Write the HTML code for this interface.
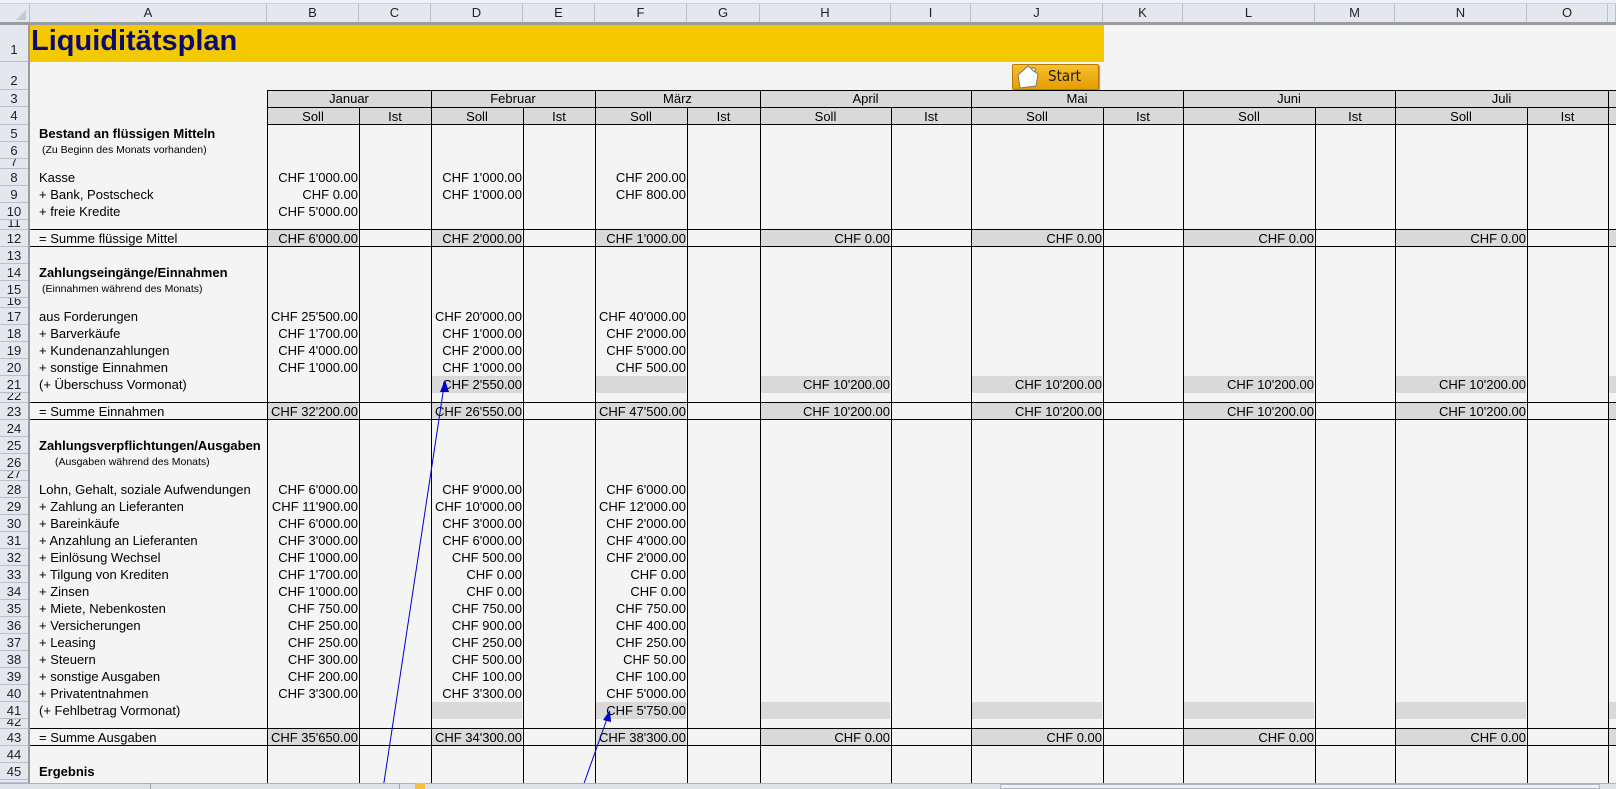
<!DOCTYPE html>
<html><head><meta charset="utf-8">
<style>
*{margin:0;padding:0;box-sizing:border-box}
body{width:1616px;height:789px;overflow:hidden;background:#f4f4f4;font-family:"Liberation Sans",Arial,sans-serif;color:#000;position:relative}
.a{position:absolute}
.t{position:absolute;height:17px;line-height:17px;font-size:13px;white-space:nowrap}
.v{text-align:right;overflow:visible}
.cB{left:267px;width:91px}.cD{left:431px;width:91px}.cF{left:595px;width:91px}
.cH{left:760px;width:130px}.cJ{left:971px;width:131px}.cL{left:1183px;width:131px}.cN{left:1395px;width:131px}
.lab{left:39px}
.sm{font-size:10.5px}
.b{font-weight:bold}
.vl{position:absolute;width:1px;background:#000;top:90px;height:693px}
.hl{position:absolute;height:1px;background:#000;left:267px;width:1349px}
.g{position:absolute;background:#d9d9d9;height:17px}
.rh{position:absolute;left:0;width:28px;text-align:center;font-size:13px;color:#222;overflow:hidden;border-bottom:1px solid #b7c0cc;background:#e4e8ee}
.ch{position:absolute;top:4px;height:18px;line-height:18px;text-align:center;font-size:13px;color:#222;border-right:1px solid #b7c0cc;background:#e4e8ee}
.mh{position:absolute;height:17px;line-height:17px;text-align:center;font-size:13px}
</style></head><body>
<div class="a" style="left:0;top:0;width:1616px;height:4px;background:#eef1f5;border-bottom:1px solid #c8ced6"></div>
<div class="ch" style="left:0;width:30px"></div>
<svg class="a" style="left:16px;top:10px" width="10" height="10"><polygon points="10,0 10,10 0,10" fill="#c3c9d1"/></svg>
<div class="ch" style="left:30px;width:237px">A</div>
<div class="ch" style="left:267px;width:92px">B</div>
<div class="ch" style="left:359px;width:72px">C</div>
<div class="ch" style="left:431px;width:92px">D</div>
<div class="ch" style="left:523px;width:72px">E</div>
<div class="ch" style="left:595px;width:92px">F</div>
<div class="ch" style="left:687px;width:73px">G</div>
<div class="ch" style="left:760px;width:131px">H</div>
<div class="ch" style="left:891px;width:80px">I</div>
<div class="ch" style="left:971px;width:132px">J</div>
<div class="ch" style="left:1103px;width:80px">K</div>
<div class="ch" style="left:1183px;width:132px">L</div>
<div class="ch" style="left:1315px;width:80px">M</div>
<div class="ch" style="left:1395px;width:132px">N</div>
<div class="ch" style="left:1527px;width:81px">O</div>
<div class="ch" style="left:1608px;width:8px"></div>
<div class="a" style="left:0;top:22px;width:1616px;height:3px;background:#9c9c9c"></div>
<div class="a" style="left:28px;top:22px;width:2px;height:761px;background:#9c9c9c"></div>

<div class="rh" style="top:25px;height:37px;line-height:50px">1</div>
<div class="rh" style="top:62px;height:28px;line-height:38px">2</div>
<div class="rh" style="top:90px;height:17px;line-height:17px">3</div>
<div class="rh" style="top:107px;height:18px;line-height:18px">4</div>
<div class="rh" style="top:125px;height:17px;line-height:17px">5</div>
<div class="rh" style="top:142px;height:17px;line-height:17px">6</div>
<div class="rh" style="top:159px;height:10px;line-height:6px">7</div>
<div class="rh" style="top:169px;height:17px;line-height:17px">8</div>
<div class="rh" style="top:186px;height:17px;line-height:17px">9</div>
<div class="rh" style="top:203px;height:17px;line-height:17px">10</div>
<div class="rh" style="top:220px;height:10px;line-height:6px">11</div>
<div class="rh" style="top:230px;height:17px;line-height:17px">12</div>
<div class="rh" style="top:247px;height:17px;line-height:17px">13</div>
<div class="rh" style="top:264px;height:17px;line-height:17px">14</div>
<div class="rh" style="top:281px;height:17px;line-height:17px">15</div>
<div class="rh" style="top:298px;height:10px;line-height:6px">16</div>
<div class="rh" style="top:308px;height:17px;line-height:17px">17</div>
<div class="rh" style="top:325px;height:17px;line-height:17px">18</div>
<div class="rh" style="top:342px;height:17px;line-height:17px">19</div>
<div class="rh" style="top:359px;height:17px;line-height:17px">20</div>
<div class="rh" style="top:376px;height:17px;line-height:17px">21</div>
<div class="rh" style="top:393px;height:10px;line-height:6px">22</div>
<div class="rh" style="top:403px;height:17px;line-height:17px">23</div>
<div class="rh" style="top:420px;height:17px;line-height:17px">24</div>
<div class="rh" style="top:437px;height:17px;line-height:17px">25</div>
<div class="rh" style="top:454px;height:17px;line-height:17px">26</div>
<div class="rh" style="top:471px;height:10px;line-height:6px">27</div>
<div class="rh" style="top:481px;height:17px;line-height:17px">28</div>
<div class="rh" style="top:498px;height:17px;line-height:17px">29</div>
<div class="rh" style="top:515px;height:17px;line-height:17px">30</div>
<div class="rh" style="top:532px;height:17px;line-height:17px">31</div>
<div class="rh" style="top:549px;height:17px;line-height:17px">32</div>
<div class="rh" style="top:566px;height:17px;line-height:17px">33</div>
<div class="rh" style="top:583px;height:17px;line-height:17px">34</div>
<div class="rh" style="top:600px;height:17px;line-height:17px">35</div>
<div class="rh" style="top:617px;height:17px;line-height:17px">36</div>
<div class="rh" style="top:634px;height:17px;line-height:17px">37</div>
<div class="rh" style="top:651px;height:17px;line-height:17px">38</div>
<div class="rh" style="top:668px;height:17px;line-height:17px">39</div>
<div class="rh" style="top:685px;height:17px;line-height:17px">40</div>
<div class="rh" style="top:702px;height:17px;line-height:17px">41</div>
<div class="rh" style="top:719px;height:10px;line-height:6px">42</div>
<div class="rh" style="top:729px;height:17px;line-height:17px">43</div>
<div class="rh" style="top:746px;height:17px;line-height:17px">44</div>
<div class="rh" style="top:763px;height:17px;line-height:17px">45</div>
<div class="rh" style="top:780px;height:3px;line-height:17px">46</div>

<div class="a" style="left:30px;top:25px;width:1074px;height:37px;background:#f5c900"></div>
<div class="a b" style="left:31px;top:25px;height:37px;line-height:33px;font-size:29px;color:#0c0c6c">Liquiditätsplan</div>

<div class="a" style="left:1012px;top:64px;width:87px;height:26px;background:linear-gradient(#f7c02c,#e59d00);border:1px solid #b67a00;border-radius:2px;box-shadow:1px 1px 1px #999"></div>
<svg class="a" style="left:1015px;top:63px" width="26" height="28" viewBox="0 0 26 28"><polygon points="3,12 13,3 23,11 21,23 5,25" fill="#fff" stroke="#777" stroke-width="1"/><polygon points="17,5 20,5 20,9 17,7" fill="#fff" stroke="#777" stroke-width="1"/></svg>
<div class="a" style="left:1048px;top:64px;height:26px;line-height:24px;font-size:15px;color:#1a1a1a;font-family:'DejaVu Sans Condensed','Liberation Sans',sans-serif">Start</div>

<div class="g" style="left:267px;top:90px;width:1349px;height:35px"></div>
<div class="g cB" style="top:230px"></div><div class="g cD" style="top:230px"></div><div class="g cF" style="top:230px"></div><div class="g cH" style="top:230px"></div><div class="g cJ" style="top:230px"></div><div class="g cL" style="top:230px"></div><div class="g cN" style="top:230px"></div><div class="g" style="left:1608px;width:8px;top:230px"></div>
<div class="g cB" style="top:403px"></div><div class="g cD" style="top:403px"></div><div class="g cF" style="top:403px"></div><div class="g cH" style="top:403px"></div><div class="g cJ" style="top:403px"></div><div class="g cL" style="top:403px"></div><div class="g cN" style="top:403px"></div><div class="g" style="left:1608px;width:8px;top:403px"></div>
<div class="g cB" style="top:729px"></div><div class="g cD" style="top:729px"></div><div class="g cF" style="top:729px"></div><div class="g cH" style="top:729px"></div><div class="g cJ" style="top:729px"></div><div class="g cL" style="top:729px"></div><div class="g cN" style="top:729px"></div><div class="g" style="left:1608px;width:8px;top:729px"></div>
<div class="g cD" style="top:376px"></div><div class="g cF" style="top:376px"></div><div class="g cH" style="top:376px"></div><div class="g cJ" style="top:376px"></div><div class="g cL" style="top:376px"></div><div class="g cN" style="top:376px"></div><div class="g" style="left:1608px;width:8px;top:376px"></div>
<div class="g cD" style="top:702px"></div><div class="g cF" style="top:702px"></div><div class="g cH" style="top:702px"></div><div class="g cJ" style="top:702px"></div><div class="g cL" style="top:702px"></div><div class="g cN" style="top:702px"></div><div class="g" style="left:1608px;width:8px;top:702px"></div>

<div class="hl" style="top:90px"></div>
<div class="hl" style="top:107px"></div>
<div class="hl" style="top:124px"></div>
<div class="hl" style="top:229px;left:30px;width:1586px"></div>
<div class="hl" style="top:246px;left:30px;width:1586px"></div>
<div class="hl" style="top:402px;left:30px;width:1586px"></div>
<div class="hl" style="top:419px;left:30px;width:1586px"></div>
<div class="hl" style="top:728px;left:30px;width:1586px"></div>
<div class="hl" style="top:745px;left:30px;width:1586px"></div>

<div class="vl" style="left:267px"></div>
<div class="vl" style="left:359px;top:107px;height:676px"></div>
<div class="vl" style="left:431px"></div>
<div class="vl" style="left:523px;top:107px;height:676px"></div>
<div class="vl" style="left:595px"></div>
<div class="vl" style="left:687px;top:107px;height:676px"></div>
<div class="vl" style="left:760px"></div>
<div class="vl" style="left:891px;top:107px;height:676px"></div>
<div class="vl" style="left:971px"></div>
<div class="vl" style="left:1103px;top:107px;height:676px"></div>
<div class="vl" style="left:1183px"></div>
<div class="vl" style="left:1315px;top:107px;height:676px"></div>
<div class="vl" style="left:1395px"></div>
<div class="vl" style="left:1527px;top:107px;height:676px"></div>
<div class="vl" style="left:1608px"></div>

<div class="mh" style="left:267px;width:164px;top:90px">Januar</div>
<div class="mh" style="left:431px;width:164px;top:90px">Februar</div>
<div class="mh" style="left:595px;width:165px;top:90px">März</div>
<div class="mh" style="left:760px;width:211px;top:90px">April</div>
<div class="mh" style="left:971px;width:212px;top:90px">Mai</div>
<div class="mh" style="left:1183px;width:212px;top:90px">Juni</div>
<div class="mh" style="left:1395px;width:213px;top:90px">Juli</div>
<div class="mh" style="left:267px;width:92px;top:108px">Soll</div><div class="mh" style="left:359px;width:72px;top:108px">Ist</div>
<div class="mh" style="left:431px;width:92px;top:108px">Soll</div><div class="mh" style="left:523px;width:72px;top:108px">Ist</div>
<div class="mh" style="left:595px;width:92px;top:108px">Soll</div><div class="mh" style="left:687px;width:73px;top:108px">Ist</div>
<div class="mh" style="left:760px;width:131px;top:108px">Soll</div><div class="mh" style="left:891px;width:80px;top:108px">Ist</div>
<div class="mh" style="left:971px;width:132px;top:108px">Soll</div><div class="mh" style="left:1103px;width:80px;top:108px">Ist</div>
<div class="mh" style="left:1183px;width:132px;top:108px">Soll</div><div class="mh" style="left:1315px;width:80px;top:108px">Ist</div>
<div class="mh" style="left:1395px;width:132px;top:108px">Soll</div><div class="mh" style="left:1527px;width:81px;top:108px">Ist</div>

<div class="t lab b" style="top:125px">Bestand an flüssigen Mitteln</div>
<div class="t lab sm" style="top:142px;left:42px">(Zu Beginn des Monats vorhanden)</div>
<div class="t lab" style="top:169px">Kasse</div>
<div class="t lab" style="top:186px">+ Bank, Postscheck</div>
<div class="t lab" style="top:203px">+ freie Kredite</div>
<div class="t lab" style="top:230px">= Summe flüssige Mittel</div>
<div class="t lab b" style="top:264px">Zahlungseingänge/Einnahmen</div>
<div class="t lab sm" style="top:281px;left:42px">(Einnahmen während des Monats)</div>
<div class="t lab" style="top:308px">aus Forderungen</div>
<div class="t lab" style="top:325px">+ Barverkäufe</div>
<div class="t lab" style="top:342px">+ Kundenanzahlungen</div>
<div class="t lab" style="top:359px">+ sonstige Einnahmen</div>
<div class="t lab" style="top:376px">(+ Überschuss Vormonat)</div>
<div class="t lab" style="top:403px">= Summe Einnahmen</div>
<div class="t lab b" style="top:437px">Zahlungsverpflichtungen/Ausgaben</div>
<div class="t lab sm" style="top:454px;left:55px">(Ausgaben während des Monats)</div>
<div class="t lab" style="top:481px">Lohn, Gehalt, soziale Aufwendungen</div>
<div class="t lab" style="top:498px">+ Zahlung an Lieferanten</div>
<div class="t lab" style="top:515px">+ Bareinkäufe</div>
<div class="t lab" style="top:532px">+ Anzahlung an Lieferanten</div>
<div class="t lab" style="top:549px">+ Einlösung Wechsel</div>
<div class="t lab" style="top:566px">+ Tilgung von Krediten</div>
<div class="t lab" style="top:583px">+ Zinsen</div>
<div class="t lab" style="top:600px">+ Miete, Nebenkosten</div>
<div class="t lab" style="top:617px">+ Versicherungen</div>
<div class="t lab" style="top:634px">+ Leasing</div>
<div class="t lab" style="top:651px">+ Steuern</div>
<div class="t lab" style="top:668px">+ sonstige Ausgaben</div>
<div class="t lab" style="top:685px">+ Privatentnahmen</div>
<div class="t lab" style="top:702px">(+ Fehlbetrag Vormonat)</div>
<div class="t lab" style="top:729px">= Summe Ausgaben</div>
<div class="t lab b" style="top:763px">Ergebnis</div>

<div class="t v cB" style="top:169px">CHF 1'000.00</div>
<div class="t v cB" style="top:186px">CHF 0.00</div>
<div class="t v cB" style="top:203px">CHF 5'000.00</div>
<div class="t v cB" style="top:230px">CHF 6'000.00</div>
<div class="t v cB" style="top:308px">CHF 25'500.00</div>
<div class="t v cB" style="top:325px">CHF 1'700.00</div>
<div class="t v cB" style="top:342px">CHF 4'000.00</div>
<div class="t v cB" style="top:359px">CHF 1'000.00</div>
<div class="t v cB" style="top:403px">CHF 32'200.00</div>
<div class="t v cB" style="top:481px">CHF 6'000.00</div>
<div class="t v cB" style="top:498px">CHF 11'900.00</div>
<div class="t v cB" style="top:515px">CHF 6'000.00</div>
<div class="t v cB" style="top:532px">CHF 3'000.00</div>
<div class="t v cB" style="top:549px">CHF 1'000.00</div>
<div class="t v cB" style="top:566px">CHF 1'700.00</div>
<div class="t v cB" style="top:583px">CHF 1'000.00</div>
<div class="t v cB" style="top:600px">CHF 750.00</div>
<div class="t v cB" style="top:617px">CHF 250.00</div>
<div class="t v cB" style="top:634px">CHF 250.00</div>
<div class="t v cB" style="top:651px">CHF 300.00</div>
<div class="t v cB" style="top:668px">CHF 200.00</div>
<div class="t v cB" style="top:685px">CHF 3'300.00</div>
<div class="t v cB" style="top:729px">CHF 35'650.00</div>

<div class="t v cD" style="top:169px">CHF 1'000.00</div>
<div class="t v cD" style="top:186px">CHF 1'000.00</div>
<div class="t v cD" style="top:230px">CHF 2'000.00</div>
<div class="t v cD" style="top:308px">CHF 20'000.00</div>
<div class="t v cD" style="top:325px">CHF 1'000.00</div>
<div class="t v cD" style="top:342px">CHF 2'000.00</div>
<div class="t v cD" style="top:359px">CHF 1'000.00</div>
<div class="t v cD" style="top:376px">CHF 2'550.00</div>
<div class="t v cD" style="top:403px">CHF 26'550.00</div>
<div class="t v cD" style="top:481px">CHF 9'000.00</div>
<div class="t v cD" style="top:498px">CHF 10'000.00</div>
<div class="t v cD" style="top:515px">CHF 3'000.00</div>
<div class="t v cD" style="top:532px">CHF 6'000.00</div>
<div class="t v cD" style="top:549px">CHF 500.00</div>
<div class="t v cD" style="top:566px">CHF 0.00</div>
<div class="t v cD" style="top:583px">CHF 0.00</div>
<div class="t v cD" style="top:600px">CHF 750.00</div>
<div class="t v cD" style="top:617px">CHF 900.00</div>
<div class="t v cD" style="top:634px">CHF 250.00</div>
<div class="t v cD" style="top:651px">CHF 500.00</div>
<div class="t v cD" style="top:668px">CHF 100.00</div>
<div class="t v cD" style="top:685px">CHF 3'300.00</div>
<div class="t v cD" style="top:729px">CHF 34'300.00</div>

<div class="t v cF" style="top:169px">CHF 200.00</div>
<div class="t v cF" style="top:186px">CHF 800.00</div>
<div class="t v cF" style="top:230px">CHF 1'000.00</div>
<div class="t v cF" style="top:308px">CHF 40'000.00</div>
<div class="t v cF" style="top:325px">CHF 2'000.00</div>
<div class="t v cF" style="top:342px">CHF 5'000.00</div>
<div class="t v cF" style="top:359px">CHF 500.00</div>
<div class="t v cF" style="top:403px">CHF 47'500.00</div>
<div class="t v cF" style="top:481px">CHF 6'000.00</div>
<div class="t v cF" style="top:498px">CHF 12'000.00</div>
<div class="t v cF" style="top:515px">CHF 2'000.00</div>
<div class="t v cF" style="top:532px">CHF 4'000.00</div>
<div class="t v cF" style="top:549px">CHF 2'000.00</div>
<div class="t v cF" style="top:566px">CHF 0.00</div>
<div class="t v cF" style="top:583px">CHF 0.00</div>
<div class="t v cF" style="top:600px">CHF 750.00</div>
<div class="t v cF" style="top:617px">CHF 400.00</div>
<div class="t v cF" style="top:634px">CHF 250.00</div>
<div class="t v cF" style="top:651px">CHF 50.00</div>
<div class="t v cF" style="top:668px">CHF 100.00</div>
<div class="t v cF" style="top:685px">CHF 5'000.00</div>
<div class="t v cF" style="top:702px">CHF 5'750.00</div>
<div class="t v cF" style="top:729px">CHF 38'300.00</div>

<div class="t v cH" style="top:230px">CHF 0.00</div><div class="t v cH" style="top:376px">CHF 10'200.00</div><div class="t v cH" style="top:403px">CHF 10'200.00</div><div class="t v cH" style="top:729px">CHF 0.00</div>
<div class="t v cJ" style="top:230px">CHF 0.00</div><div class="t v cJ" style="top:376px">CHF 10'200.00</div><div class="t v cJ" style="top:403px">CHF 10'200.00</div><div class="t v cJ" style="top:729px">CHF 0.00</div>
<div class="t v cL" style="top:230px">CHF 0.00</div><div class="t v cL" style="top:376px">CHF 10'200.00</div><div class="t v cL" style="top:403px">CHF 10'200.00</div><div class="t v cL" style="top:729px">CHF 0.00</div>
<div class="t v cN" style="top:230px">CHF 0.00</div><div class="t v cN" style="top:376px">CHF 10'200.00</div><div class="t v cN" style="top:403px">CHF 10'200.00</div><div class="t v cN" style="top:729px">CHF 0.00</div>

<svg class="a" style="left:0;top:0" width="1616" height="789">
<line x1="383" y1="789" x2="444" y2="386" stroke="#0000c8" stroke-width="1"/>
<polygon points="445,380 440,392 449,392" fill="#0000c8"/>
<line x1="582" y1="789" x2="608" y2="716" stroke="#0000c8" stroke-width="1"/>
<polygon points="610,710 603,720 611,722" fill="#0000c8"/>
</svg>

<div class="a" style="left:0;top:783px;width:1616px;height:6px;background:#dde2e9;border-top:1px solid #a9b2be"></div>
<div class="a" style="left:150px;top:783px;width:250px;height:6px;border-left:1px solid #9aa;border-right:1px solid #9aa"></div>
<div class="a" style="left:415px;top:783px;width:10px;height:6px;background:#f3c040"></div>
<div class="a" style="left:1000px;top:784px;width:600px;height:5px;background:#eef0f3;border:1px solid #b0b8c2"></div>
</body></html>
